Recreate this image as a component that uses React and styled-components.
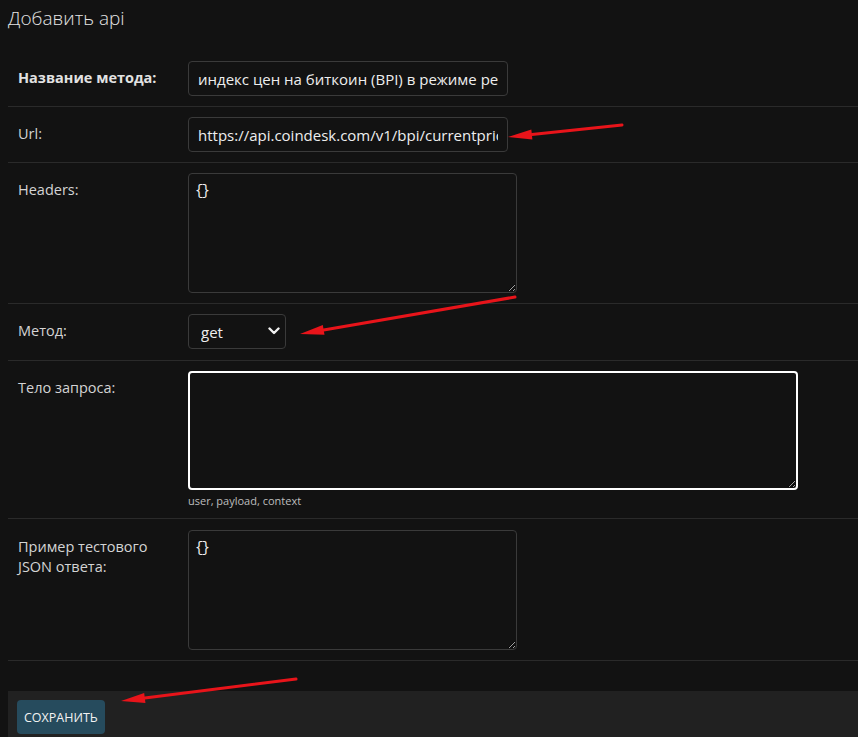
import styled, { createGlobalStyle } from "styled-components"

const GlobalStyle = createGlobalStyle`
    html, body {
        margin: 0;
        padding: 0;
        background: #121212;
        color: #eeeeee;
        font-family: "Open Sans", "Noto Sans", sans-serif;
        overflow: hidden;
    }
`

const Page = styled.div`
    position: relative;
    width: 858px;
    height: 737px;
    padding-left: 8px;
    box-sizing: border-box;
    overflow: hidden;
`

const Title = styled.h1`
    margin: 0;
    padding: 6px 0 21px;
    font-size: 19px;
    line-height: 24px;
    font-weight: 300;
    color: #e4e4e4;
`

const Row = styled.div`
    display: flex;
    padding: ${props => props.pad || "10px"} 0 ${props => props.padBottom || props.pad || "10px"} 10px;
    border-bottom: 1px solid #2a2a2a;
`

const Label = styled.label`
    width: 150px;
    padding-right: 20px;
    flex-shrink: 0;
    padding-top: 7px;
    font-size: 14.5px;
    line-height: 20px;
    font-weight: ${props => props.required ? 700 : 400};
    color: ${props => props.required ? "#e2e2e2" : "#d4d4d4"};
`

const Field = styled.div`
    display: flex;
    flex-direction: column;
`

const TextInput = styled.input`
    width: 320px;
    height: 35px;
    box-sizing: border-box;
    padding: 0 9px;
    background: #121212;
    border: 1px solid #3a3a3a;
    border-radius: 4px;
    color: #eeeeee;
    font-family: "Open Sans", sans-serif;
    font-size: 15px;
    outline: none;
`

const TextArea = styled.textarea`
    width: ${props => props.wide ? "610px" : "329px"};
    height: ${props => props.h || 120}px;
    box-sizing: border-box;
    padding: 8px 6px;
    background: #121212;
    border: ${props => props.focused ? "2px solid #ffffff" : "1px solid #3a3a3a"};
    border-radius: 4px;
    color: #eeeeee;
    font-family: "Liberation Mono", monospace;
    font-size: 14px;
    letter-spacing: -2px;
    line-height: 18px;
    outline: none;
    resize: both;
    display: block;
`

const Help = styled.div`
    margin-top: 4px;
    font-size: 11px;
    line-height: 14px;
    color: #bdbdbd;
`

const SelectWrap = styled.div`
    position: relative;
    width: 98px;
    height: 35px;
`

const Select = styled.select`
    appearance: none;
    width: 100%;
    height: 100%;
    padding: 0 12px;
    background: #121212;
    border: 1px solid #3a3a3a;
    border-radius: 4px;
    color: #eeeeee;
    font-family: "Open Sans", sans-serif;
    font-size: 15px;
    outline: none;
`

const Chevron = styled.svg`
    position: absolute;
    right: 6px;
    top: 13px;
    pointer-events: none;
`

const SubmitRow = styled.div`
    margin-top: 30px;
    padding: 9px 9px 20px;
    background: #212121;
`

const SaveButton = styled.button`
    height: 34px;
    padding: 0 7px;
    background: #264b5d;
    border: none;
    border-radius: 4px;
    color: #f2f2f2;
    font-family: "Open Sans", sans-serif;
    font-size: 12.5px;
    cursor: pointer;
`

const Arrows = styled.svg`
    position: absolute;
    left: 0;
    top: 0;
    pointer-events: none;
`

const arrows = [
    { from: [622, 125], to: [508, 137] },
    { from: [515, 297], to: [300, 334] },
    { from: [296, 679], to: [121, 701] },
]

const Arrow = ({ from, to }) => {
    const [x1, y1] = from
    const [x2, y2] = to
    const len = Math.hypot(x2 - x1, y2 - y1)
    const ux = (x2 - x1) / len
    const uy = (y2 - y1) / len
    const bx = x2 - ux * 24
    const by = y2 - uy * 24
    const px = -uy * 5
    const py = ux * 5
    return (
        <g>
            <line x1={x1} y1={y1} x2={bx} y2={by} stroke="#e8141a" strokeWidth="3" strokeLinecap="round" />
            <polygon points={`${x2},${y2} ${bx + px},${by + py} ${bx - px},${by - py}`} fill="#e8141a" />
        </g>
    )
}

const App = () => {
    return (
        <Page>
            <GlobalStyle />
            <Title>Добавить api</Title>
            <Row>
                <Label required>Название метода:</Label>
                <TextInput defaultValue="индекс цен на биткоин (BPI) в режиме реального времени" />
            </Row>
            <Row>
                <Label>Url:</Label>
                <TextInput defaultValue="https://api.coindesk.com/v1/bpi/currentprice.json" />
            </Row>
            <Row>
                <Label>Headers:</Label>
                <TextArea defaultValue="{}" />
            </Row>
            <Row padBottom="11px">
                <Label>Метод:</Label>
                <SelectWrap>
                    <Select defaultValue="get">
                        <option value="get">get</option>
                        <option value="post">post</option>
                    </Select>
                    <Chevron width="12" height="8" viewBox="0 0 12 8">
                        <path d="M1.5 1.5 L6 6 L10.5 1.5" fill="none" stroke="#f0f0f0" strokeWidth="2.4" strokeLinecap="round" strokeLinejoin="round" />
                    </Chevron>
                </SelectWrap>
            </Row>
            <Row>
                <Label>Тело запроса:</Label>
                <Field>
                    <TextArea wide focused h={119} defaultValue="" />
                    <Help>user, payload, context</Help>
                </Field>
            </Row>
            <Row pad="11px" padBottom="10px">
                <Label>Пример тестового JSON ответа:</Label>
                <TextArea defaultValue="{}" />
            </Row>
            <SubmitRow>
                <SaveButton>СОХРАНИТЬ</SaveButton>
            </SubmitRow>
            <Arrows width="858" height="737">
                {arrows.map((a, i) => <Arrow key={i} from={a.from} to={a.to} />)}
            </Arrows>
        </Page>
    )
}

export default App
